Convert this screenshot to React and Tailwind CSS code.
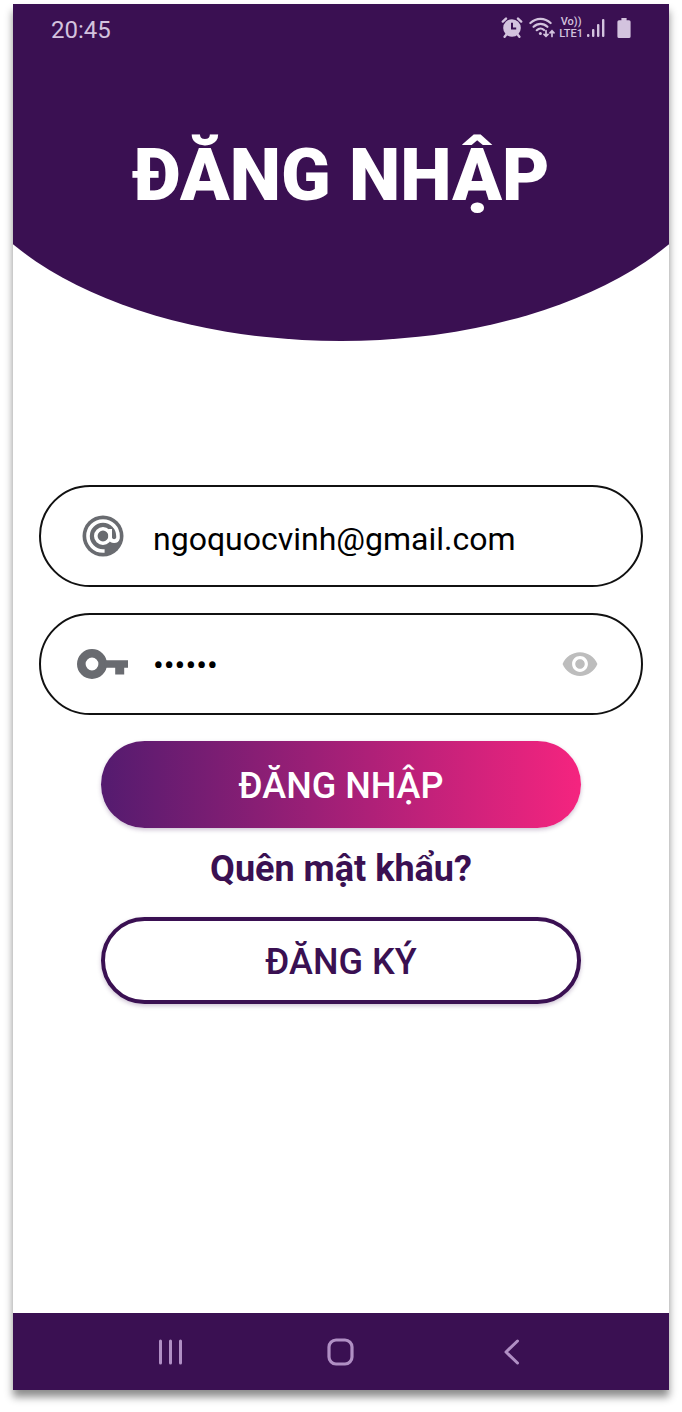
import { useState } from "react";
import { MdVisibility, MdVisibilityOff } from "react-icons/md";

function AlarmIcon() {
  return (
    <svg viewBox="0 0 22 22" className="size-[22px]" aria-hidden="true">
      <g stroke="currentColor" strokeLinecap="round" strokeWidth="2.4">
        <path d="M1.800 4.600 5 1.600M20.200 4.600 17 1.600M5.400 17.600 3.600 19.800M16.600 17.600 18.400 19.800" />
      </g>
      <circle cx="11" cy="11" r="8.8" fill="currentColor" />
      <path d="M11 5.800v5.600h4.200" fill="none" stroke="#3a1052" strokeWidth="2" />
    </svg>
  );
}

function WifiIcon() {
  return (
    <svg viewBox="0 0 26 22" className="h-[22px] w-[26px]" aria-hidden="true" fill="none" stroke="currentColor" strokeLinecap="round" strokeWidth="2.2">
      <path d="M1.400 6C7.200.4 15.800.4 21.600 6M4.600 9.800c4-4 9.800-4 13.800 0M7.800 13.200c2.200-2.200 5.200-2.200 7.200-.2" />
      <circle cx="11.400" cy="16.400" r="1.500" fill="currentColor" stroke="none" />
      <path d="M17 13.600v5.400M15 17.400l2 2 2-2M23 19.400v-5.400M21 15.800l2-2 2 2" strokeWidth="1.700" />
    </svg>
  );
}

function SignalIcon() {
  return (
    <svg viewBox="0 0 18 20" className="h-5 w-[18px]" aria-hidden="true" fill="currentColor">
      <rect x="0" y="16" width="2.4" height="3" rx="1" />
      <rect x="5" y="11" width="2.4" height="8" rx="1" />
      <rect x="10" y="6" width="2.4" height="13" rx="1" />
      <rect x="15" y="1" width="2.4" height="18" rx="1" />
    </svg>
  );
}

function BatteryIcon() {
  return (
    <svg viewBox="0 0 14 22" className="h-[22px] w-[14px]" aria-hidden="true" fill="currentColor">
      <path d="M4.400 1h5.200v2.200H12a1.600 1.600 0 0 1 1.600 1.600v14.600A1.600 1.600 0 0 1 12 21H2a1.600 1.600 0 0 1-1.600-1.600V4.800A1.600 1.600 0 0 1 2 3.200h2.400z" />
    </svg>
  );
}

function AtIcon() {
  return (
    <svg viewBox="0 0 42 42" className="size-[42px]" aria-hidden="true">
      <circle cx="21" cy="21" r="20.5" fill="#696b70" />
      <g fill="none" stroke="#fff" strokeWidth="3.6">
        <circle cx="21" cy="21" r="7.2" />
        <path d="M28.200 14v9a4 4 0 0 0 7.800 0v-2A15 15 0 1 0 21 36h1.600" />
      </g>
    </svg>
  );
}

function KeyIcon() {
  return (
    <svg viewBox="0 0 52 32" className="h-8 w-[52px]" aria-hidden="true">
      <circle cx="15" cy="16" r="10.700" fill="none" stroke="#696b70" strokeWidth="8.600" />
      <path d="M27.500 12.200H51v7.600h-3.800v6.800h-9v-6.800H27.500z" fill="#696b70" />
    </svg>
  );
}

const fieldBox =
  "flex items-center rounded-full border-2 border-[#111] py-[26px] pr-[42px] pl-[36px]";
const fieldInput =
  "ml-6 h-[46px] min-w-0 flex-1 bg-transparent text-[32px] leading-[40px] text-black outline-none";

export default function App() {
  const [email, setEmail] = useState("ngoquocvinh@gmail.com");
  const [password, setPassword] = useState("vinh12");
  const [shown, setShown] = useState(false);

  return (
    <div className="flex min-h-screen flex-col bg-white px-[13px] pt-1 pb-[22px] font-['Roboto','Noto_Sans',sans-serif]">
      <div className="flex flex-1 flex-col bg-white shadow-[0_7px_8px_rgba(0,0,0,0.45)]">
        <header className="overflow-hidden">
          <div className="-mx-[10%] bg-[#3a1052] px-[10%] pb-[120px] [border-radius:0_0_50%_50%/0_0_217px_217px]">
            <div className="flex items-start justify-between px-[38px] pt-3 text-[#d3c3de]">
              <time className="text-[24px] leading-7">20:45</time>
              <div className="flex items-center">
                <AlarmIcon />
                <span className="ml-[6px] flex">
                  <WifiIcon />
                </span>
                <span className="ml-1 flex flex-col text-center text-[11px] leading-[12px] font-medium">
                  <span>Vo))</span>
                  <span>LTE1</span>
                </span>
                <span className="ml-1 flex">
                  <SignalIcon />
                </span>
                <span className="ml-3 flex">
                  <BatteryIcon />
                </span>
              </div>
            </div>
            <h1 className="pt-[86px] text-center text-[73px] leading-[91px] font-black whitespace-nowrap text-white">
              ĐĂNG NHẬP
            </h1>
          </div>
        </header>

        <main className="flex flex-1 flex-col px-[26px] pt-[144px] pb-10">
          <form className="flex flex-col gap-[26px]" onSubmit={(e) => e.preventDefault()}>
            <div className={fieldBox}>
              <label htmlFor="email" aria-label="Email" className="flex w-[52px] justify-center">
                <AtIcon />
              </label>
              <input
                id="email"
                type="email"
                className={`${fieldInput} pt-[6px]`}
                value={email}
                onChange={(e) => setEmail(e.target.value)}
              />
            </div>
            <div className={fieldBox}>
              <label htmlFor="password" aria-label="Mật khẩu" className="flex w-[52px] justify-center">
                <KeyIcon />
              </label>
              <input
                id="password"
                type={shown ? "text" : "password"}
                className={`${fieldInput} pt-[2px]`}
                value={password}
                onChange={(e) => setPassword(e.target.value)}
              />
              <button
                type="button"
                aria-label="Hiện mật khẩu"
                className="text-[#bdbdbd]"
                onClick={() => setShown(!shown)}
              >
                {shown ? <MdVisibilityOff size={38} /> : <MdVisibility size={38} />}
              </button>
            </div>
            <div className="mx-[62px] flex flex-col items-stretch">
              <button
                type="submit"
                className="rounded-full bg-linear-to-r/srgb from-[#541b6f] to-[#f5247f] pt-6 pb-5 text-[36px] leading-[43px] font-medium text-white shadow-[0_2px_4px_rgba(58,16,82,0.25)]"
              >
                ĐĂNG NHẬP
              </button>
              <a
                href="#forgot"
                className="mt-5 mb-[26px] self-center text-[36px] leading-[43px] font-bold text-[#3a1052]"
              >
                Quên mật khẩu?
              </a>
              <button
                type="button"
                className="rounded-full border-4 border-[#3a1052] bg-white pt-5 pb-4 text-[36px] leading-[43px] font-medium text-[#3a1052] shadow-[0_2px_4px_rgba(58,16,82,0.25)]"
              >
                ĐĂNG KÝ
              </button>
            </div>
          </form>
        </main>

        <nav className="flex justify-center bg-[#3a1052] py-6 text-[#b08fc4]">
          <button type="button" aria-label="Recents" className="flex w-[26%] justify-center">
            <svg viewBox="0 0 29 29" className="size-[29px]" stroke="currentColor" strokeLinecap="round" strokeWidth="3">
              <path d="M4.500 4v22M14.500 4v22M24.500 4v22" />
            </svg>
          </button>
          <button type="button" aria-label="Home" className="flex w-[26%] justify-center">
            <svg viewBox="0 0 29 29" className="size-[29px]" fill="none" stroke="currentColor" strokeWidth="3.2">
              <rect x="3" y="3" width="23" height="24" rx="7" />
            </svg>
          </button>
          <button type="button" aria-label="Back" className="flex w-[26%] justify-center">
            <svg viewBox="0 0 29 29" className="size-[29px]" fill="none" stroke="currentColor" strokeLinecap="round" strokeLinejoin="round" strokeWidth="3">
              <path d="M20.500 4 9 15 20.500 26" />
            </svg>
          </button>
        </nav>
      </div>
    </div>
  );
}
